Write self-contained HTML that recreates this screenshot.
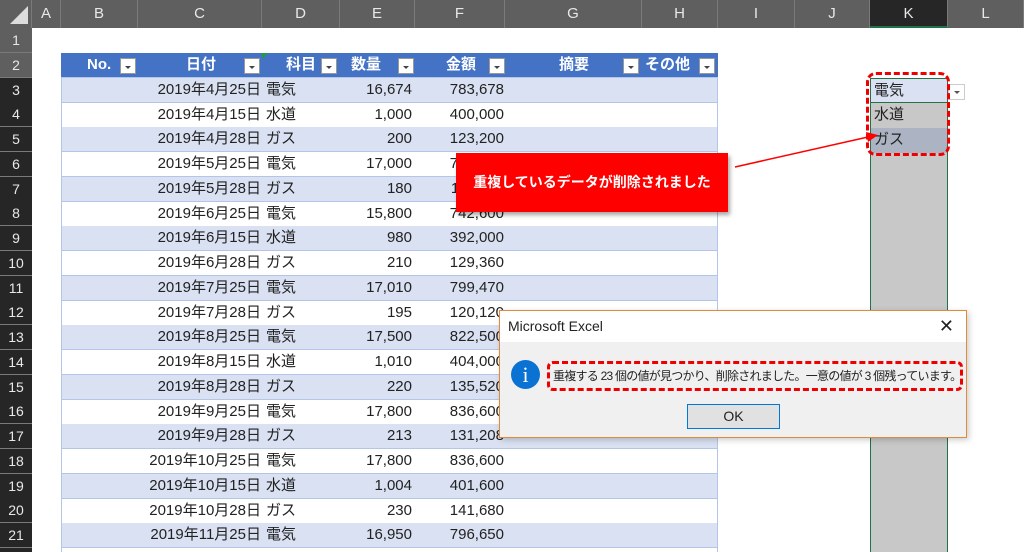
<!DOCTYPE html>
<html><head><meta charset="utf-8"><style>
*{margin:0;padding:0;box-sizing:border-box}
html,body{width:1024px;height:552px;overflow:hidden}
body{background:#fff;font-family:"Liberation Sans","Noto Sans CJK JP",sans-serif;position:relative;color:#222}
.ab{position:absolute}
#colh{left:0;top:0;width:1024px;height:28px;background:#5f5f5f}
.ch{position:absolute;top:0;height:28px;line-height:28px;text-align:center;color:#e8e8e8;font-size:15px;border-right:1px solid #7a7a7a}
#rowh{left:0;top:28px;width:32px;height:524px;background:#5f5f5f;overflow:hidden}
.rh{position:absolute;left:0;width:32px;height:25px;line-height:25px;text-align:center;color:#e8e8e8;font-size:14px;border-bottom:1px solid #7a7a7a}
.row{position:absolute;left:61px;width:657px;height:25px;font-size:15px;line-height:24px;border-bottom:1px solid #b4c6e7}
.row span{position:absolute;top:0;white-space:nowrap}
.o{background:#d9e1f2}.e{background:#fff}
.c{right:457px}.d{left:205px}.ee{right:306px}.f{right:214px}
.hdr{background:#4472c4;color:#fff;font-weight:bold}
.dd{position:absolute;top:5px;width:16px;height:16px;background:#fff;border:1px solid #999}
.dd:after{content:"";position:absolute;left:4px;top:7px;border-left:3px solid transparent;border-right:3px solid transparent;border-top:3px solid #444}
</style></head><body>
<div class="ab" id="colh">
<div class="ch" style="left:0;width:32px"><svg width="32" height="28"><polygon points="28,6 28,24 10,24" fill="#ddd"/></svg></div>
<div class="ch" style="left:32px;width:29px">A</div>
<div class="ch" style="left:61px;width:77px">B</div>
<div class="ch" style="left:138px;width:124px">C</div>
<div class="ch" style="left:262px;width:78px">D</div>
<div class="ch" style="left:340px;width:75px">E</div>
<div class="ch" style="left:415px;width:90px">F</div>
<div class="ch" style="left:505px;width:137px">G</div>
<div class="ch" style="left:642px;width:76px">H</div>
<div class="ch" style="left:718px;width:77px">I</div>
<div class="ch" style="left:795px;width:75px">J</div>
<div class="ch" style="left:870px;width:78px;background:#262626;border-bottom:2px solid #217346">K</div>
<div class="ch" style="left:948px;width:76px">L</div>
</div>
<div class="ab" id="rowh">
<div class="rh" style="top:0">1</div><div class="rh" style="top:24.75px">2</div><div class="rh" style="top:49.5px;background:#262626">3</div><div class="rh" style="top:74.25px;background:#262626">4</div><div class="rh" style="top:99px;background:#262626">5</div><div class="rh" style="top:123.75px;background:#262626">6</div><div class="rh" style="top:148.5px;background:#262626">7</div><div class="rh" style="top:173.25px;background:#262626">8</div><div class="rh" style="top:198px;background:#262626">9</div><div class="rh" style="top:222.75px;background:#262626">10</div><div class="rh" style="top:247.5px;background:#262626">11</div><div class="rh" style="top:272.25px;background:#262626">12</div><div class="rh" style="top:297px;background:#262626">13</div><div class="rh" style="top:321.75px;background:#262626">14</div><div class="rh" style="top:346.5px;background:#262626">15</div><div class="rh" style="top:371.25px;background:#262626">16</div><div class="rh" style="top:396px;background:#262626">17</div><div class="rh" style="top:420.75px;background:#262626">18</div><div class="rh" style="top:445.5px;background:#262626">19</div><div class="rh" style="top:470.25px;background:#262626">20</div><div class="rh" style="top:495px;background:#262626">21</div><div class="rh" style="top:519.75px;background:#262626">22</div>
</div>
<div class="ab" style="left:870px;top:153px;width:78px;height:399px;background:#c8c8c8;border-left:1px solid #217346;border-right:1px solid #217346"></div>
<div class="ab" style="left:870px;top:78px;width:78px;height:25px;background:#d9e1f2;border:1px solid #217346;font-size:15px;line-height:23px;padding-left:3px">電気</div>
<div class="ab" style="left:870px;top:103px;width:78px;height:25px;background:#c8c8c8;border-left:1px solid #217346;border-right:1px solid #217346;font-size:15px;line-height:23px;padding-left:3px">水道</div>
<div class="ab" style="left:870px;top:128px;width:78px;height:25px;background:#acb4c4;border-left:1px solid #217346;border-right:1px solid #217346;font-size:15px;line-height:23px;padding-left:3px">ガス</div>
<div class="ab" style="left:948px;top:84px;width:17px;height:16px;background:#fff;border:1px solid #ccc"><div style="position:absolute;left:5px;top:6px;border-left:3px solid transparent;border-right:3px solid transparent;border-top:3px solid #555"></div></div>
<div class="ab" style="left:866px;top:72px;width:84px;height:84px;border:3px dashed #e00;border-radius:10px"></div>

<div class="row hdr" style="top:53px"><span style="left:26px">No.</span><div class="dd" style="left:59px"></div><span style="left:125px">日付</span><div class="dd" style="left:183px"></div><span style="left:225px">科目</span><div class="dd" style="left:260px"></div><span style="left:290px">数量</span><div class="dd" style="left:337px"></div><span style="left:385px">金額</span><div class="dd" style="left:428px"></div><span style="left:498px">摘要</span><div class="dd" style="left:562px"></div><span style="left:584px">その他</span><div class="dd" style="left:638px"></div></div>
<div class="row o" style="top:78px"><span class="c">2019年4月25日</span><span class="d">電気</span><span class="ee">16,674</span><span class="f">783,678</span></div>
<div class="row e" style="top:103px"><span class="c">2019年4月15日</span><span class="d">水道</span><span class="ee">1,000</span><span class="f">400,000</span></div>
<div class="row o" style="top:127px"><span class="c">2019年4月28日</span><span class="d">ガス</span><span class="ee">200</span><span class="f">123,200</span></div>
<div class="row e" style="top:152px"><span class="c">2019年5月25日</span><span class="d">電気</span><span class="ee">17,000</span><span class="f">799,000</span></div>
<div class="row o" style="top:177px"><span class="c">2019年5月28日</span><span class="d">ガス</span><span class="ee">180</span><span class="f">110,880</span></div>
<div class="row e" style="top:202px"><span class="c">2019年6月25日</span><span class="d">電気</span><span class="ee">15,800</span><span class="f">742,600</span></div>
<div class="row o" style="top:226px"><span class="c">2019年6月15日</span><span class="d">水道</span><span class="ee">980</span><span class="f">392,000</span></div>
<div class="row e" style="top:251px"><span class="c">2019年6月28日</span><span class="d">ガス</span><span class="ee">210</span><span class="f">129,360</span></div>
<div class="row o" style="top:276px"><span class="c">2019年7月25日</span><span class="d">電気</span><span class="ee">17,010</span><span class="f">799,470</span></div>
<div class="row e" style="top:301px"><span class="c">2019年7月28日</span><span class="d">ガス</span><span class="ee">195</span><span class="f">120,120</span></div>
<div class="row o" style="top:325px"><span class="c">2019年8月25日</span><span class="d">電気</span><span class="ee">17,500</span><span class="f">822,500</span></div>
<div class="row e" style="top:350px"><span class="c">2019年8月15日</span><span class="d">水道</span><span class="ee">1,010</span><span class="f">404,000</span></div>
<div class="row o" style="top:375px"><span class="c">2019年8月28日</span><span class="d">ガス</span><span class="ee">220</span><span class="f">135,520</span></div>
<div class="row e" style="top:400px"><span class="c">2019年9月25日</span><span class="d">電気</span><span class="ee">17,800</span><span class="f">836,600</span></div>
<div class="row o" style="top:424px"><span class="c">2019年9月28日</span><span class="d">ガス</span><span class="ee">213</span><span class="f">131,208</span></div>
<div class="row e" style="top:449px"><span class="c">2019年10月25日</span><span class="d">電気</span><span class="ee">17,800</span><span class="f">836,600</span></div>
<div class="row o" style="top:474px"><span class="c">2019年10月15日</span><span class="d">水道</span><span class="ee">1,004</span><span class="f">401,600</span></div>
<div class="row e" style="top:499px"><span class="c">2019年10月28日</span><span class="d">ガス</span><span class="ee">230</span><span class="f">141,680</span></div>
<div class="row o" style="top:523px"><span class="c">2019年11月25日</span><span class="d">電気</span><span class="ee">16,950</span><span class="f">796,650</span></div>
<div class="ab" style="left:61px;top:78px;width:1px;height:474px;background:#b4c6e7"></div>
<div class="ab" style="left:717px;top:78px;width:1px;height:474px;background:#b4c6e7"></div>
<div class="ab" style="left:262px;top:53px;border-left:6px solid #1e9e3e;border-bottom:6px solid transparent"></div>

<div class="ab" style="left:456px;top:153px;width:272px;height:59px;background:#f00;color:#fff;font-weight:bold;font-size:14px;line-height:59px;text-align:center;box-shadow:2px 3px 4px rgba(0,0,0,.35)">重複しているデータが削除されました</div>
<svg class="ab" style="left:0;top:0" width="1024" height="552"><line x1="735" y1="167" x2="868" y2="137" stroke="#f00" stroke-width="1.5"/><polygon points="878,135 866,132 868,142" fill="#f00"/></svg>

<div class="ab" style="left:499px;top:310px;width:468px;height:128px;background:#f0f0f0;border:1px solid #e08a3c;box-shadow:2px 2px 6px rgba(0,0,0,.2)">
<div style="height:31px;background:#fff;font-size:14px;line-height:31px;padding-left:8px">Microsoft Excel<span style="position:absolute;right:12px;top:0;font-size:18px;font-weight:300">✕</span></div>
<div style="position:absolute;left:11px;top:49px;width:29px;height:29px;border-radius:50%;background:#0a72d2;color:#fff;text-align:center;font-size:22px;line-height:29px;font-family:'Liberation Serif',serif">i</div>
<div style="position:absolute;left:47px;top:50px;width:416px;height:30px;border:3px dashed #e00;border-radius:6px;font-size:12px;line-height:24px;padding-left:3px;white-space:nowrap;letter-spacing:-0.75px">重複する 23 個の値が見つかり、削除されました。一意の値が 3 個残っています。</div>
<div style="position:absolute;left:187px;top:93px;width:93px;height:25px;background:#e1e1e1;border:1px solid #0078d7;text-align:center;font-size:14px;line-height:23px">OK</div>
</div>
</body></html>
